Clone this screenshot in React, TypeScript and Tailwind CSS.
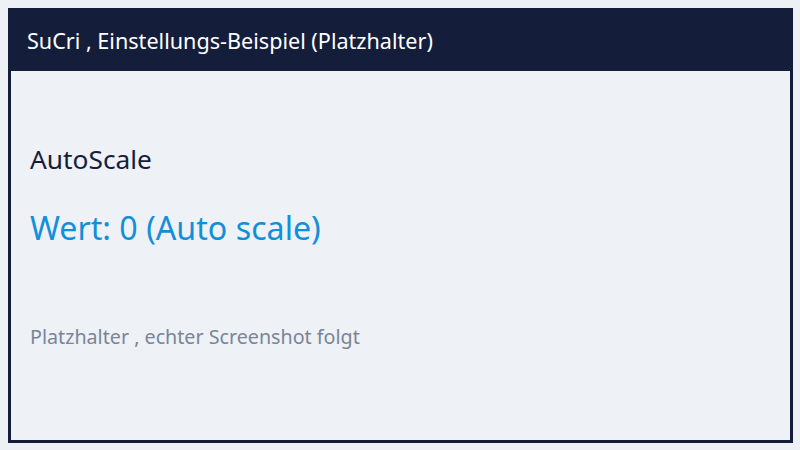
export default function App() {
  return (
    <div
      className="h-[450px] w-[800px] bg-[#edf0f5] pb-[7px] pl-2 pr-[7px] pt-2"
      style={{ fontFamily: '"Noto Sans", "Open Sans", sans-serif' }}
    >
      <div className="flex h-full flex-col border-[3px] border-[#141e3b] bg-[#eef1f6]">
        <div className="flex h-[60px] items-center bg-[#141e3b] px-[16px] text-[21.6px] text-white">
          SuCri , Einstellungs-Beispiel (Platzhalter)
        </div>
        <div className="flex flex-col px-[19px] pt-[75px]">
          <div className="text-[26.3px] leading-none text-[#141e3b]">AutoScale</div>
          <div className="mt-[40px] text-[32.2px] leading-none text-[#128fdb]">Wert: 0 (Auto scale)</div>
          <div className="mt-[82px] text-[19.7px] leading-none text-[#7a8597]">
            Platzhalter , echter Screenshot folgt
          </div>
        </div>
      </div>
    </div>
  );
}
